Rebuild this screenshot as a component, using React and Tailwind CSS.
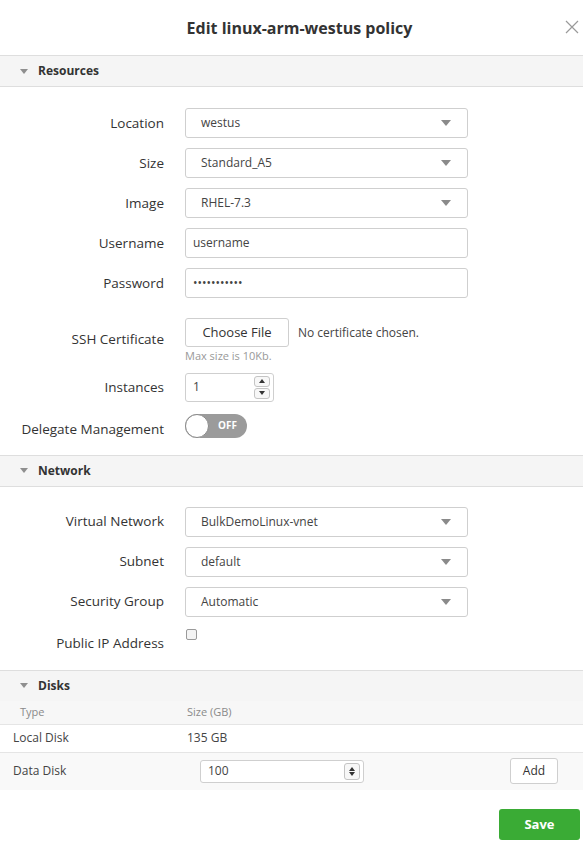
import React from "react";

const Caret = () => (
  <svg width="10" height="6" viewBox="0 0 10 6" className="shrink-0">
    <path d="M0 0 L10 0 L5 6 Z" fill="#8a8a8a" />
  </svg>
);

function SectionHeader({ title }) {
  return (
    <div className="flex h-[32px] items-center gap-[10px] border-y border-[#dedede] bg-[#f5f5f5] pl-[20px]">
      <svg width="8" height="5" viewBox="0 0 8 5">
        <path d="M0 0 L8 0 L4 5 Z" fill="#8f8f8f" />
      </svg>
      <span className="text-[12px] font-bold text-[#333]">{title}</span>
    </div>
  );
}

function Row({ label, children, className = "" }) {
  return (
    <div className={`flex items-center ${className}`}>
      <div className="w-[164px] shrink-0 text-right text-[13.5px] text-[#333]">{label}</div>
      <div className="ml-[21px] flex items-center">{children}</div>
    </div>
  );
}

function Select({ value }) {
  return (
    <div className="flex h-[30px] w-[283px] items-center justify-between rounded-[3px] border border-[#cfcfcf] bg-white pl-[15px] pr-[16px] text-[12px] text-[#444]">
      <span>{value}</span>
      <Caret />
    </div>
  );
}

function TextInput({ value }) {
  return (
    <div className="flex h-[30px] w-[283px] items-center rounded-[3px] border border-[#cfcfcf] bg-white pl-[7px] text-[12px] text-[#444]">
      {value}
    </div>
  );
}

function Spinner() {
  return (
    <div className="flex flex-col gap-[1px]">
      <div className="flex h-[11px] w-[16px] items-center justify-center rounded-[3px] border border-[#c4c4c4] bg-[#f7f7f7]">
        <svg width="6" height="4" viewBox="0 0 6 4">
          <path d="M0 4 L6 4 L3 0 Z" fill="#333" />
        </svg>
      </div>
      <div className="flex h-[11px] w-[16px] items-center justify-center rounded-[3px] border border-[#c4c4c4] bg-[#f7f7f7]">
        <svg width="6" height="4" viewBox="0 0 6 4">
          <path d="M0 0 L6 0 L3 4 Z" fill="#333" />
        </svg>
      </div>
    </div>
  );
}

export default function App() {
  return (
    <div className="h-[860px] w-[583px] bg-white" style={{ fontFamily: '"Open Sans", "Noto Sans", sans-serif' }}>
      {/* header */}
      <div className="flex h-[56px] items-center border-b border-[#dedede] pl-[34px] pr-[4px]">
        <div className="flex-1 text-center text-[16px] font-bold text-[#333]">Edit linux-arm-westus policy</div>
        <svg width="14" height="14" viewBox="0 0 14 14" className="mb-[2px]">
          <path d="M1 1 L13 13 M13 1 L1 13" stroke="#9a9a9a" strokeWidth="1.2" />
        </svg>
      </div>

      <div className="-mt-px">
        <SectionHeader title="Resources" />
      </div>

      <div className="flex flex-col gap-[10px] pt-[21px]">
        <Row label="Location"><Select value="westus" /></Row>
        <Row label="Size"><Select value="Standard_A5" /></Row>
        <Row label="Image"><Select value="RHEL-7.3" /></Row>
        <Row label="Username"><TextInput value="username" /></Row>
        <Row label="Password"><TextInput value="•••••••••••" /></Row>
      </div>

      <div className="mt-[20px] flex">
        <div className="w-[164px] shrink-0 pt-[11px] text-right text-[13.5px] text-[#333]">SSH Certificate</div>
        <div className="ml-[21px] flex flex-col">
          <div className="flex items-center">
            <div className="flex h-[29px] w-[104px] items-center justify-center rounded-[3px] border border-[#cfcfcf] text-[13px] text-[#333]">Choose File</div>
            <span className="ml-[9px] text-[12px] text-[#444]">No certificate chosen.</span>
          </div>
          <div className="mt-[1px] text-[11px] text-[#999]">Max size is 10Kb.</div>
        </div>
      </div>

      <Row label="Instances" className="mt-[8px]">
        <div className="flex h-[29px] w-[89px] items-center justify-between rounded-[3px] border border-[#cfcfcf] pl-[7px] pr-[3px] text-[12px] text-[#444]">
          <span>1</span>
          <Spinner />
        </div>
      </Row>

      <div className="mt-[12px] flex h-[24px] items-start">
        <div className="mt-[5px] w-[164px] shrink-0 text-right text-[13.5px] text-[#333]">Delegate Management</div>
        <div className="ml-[21px] flex h-[24px] w-[62px] items-center rounded-full bg-[#9b9b9b]">
          <div className="h-[24px] w-[24px] rounded-full border border-[#8a8a8a] bg-white" />
          <span className="ml-[9px] text-[10px] font-bold text-white">OFF</span>
        </div>
      </div>

      <div className="mt-[17px]">
        <SectionHeader title="Network" />
      </div>

      <div className="flex flex-col gap-[10px] pt-[20px]">
        <Row label="Virtual Network"><Select value="BulkDemoLinux-vnet" /></Row>
        <Row label="Subnet"><Select value="default" /></Row>
        <Row label="Security Group"><Select value="Automatic" /></Row>
      </div>

      <div className="mt-[12px] flex">
        <div className="w-[164px] shrink-0 pt-[4px] text-right text-[13.5px] text-[#333]">Public IP Address</div>
        <div className="ml-[22px] h-[11px] w-[11px] rounded-[2px] border border-[#9a9a9a] bg-[#f4f4f4]" />
      </div>

      <div className="mt-[17px]">
        <SectionHeader title="Disks" />
      </div>

      <div className="-mt-px text-[12px]">
        <div className="flex h-[24px] items-center border-b border-[#e5e5e5] bg-[#f7f7f7] text-[11px] text-[#8a8a8a]">
          <span className="w-[187px] pl-[20px]">Type</span>
          <span>Size (GB)</span>
        </div>
        <div className="flex h-[28px] items-center border-b border-[#e5e5e5] text-[#444]">
          <span className="w-[187px] pl-[13px]">Local Disk</span>
          <span>135 GB</span>
        </div>
        <div className="flex h-[37px] items-center bg-[#f9f9f9] text-[#444]">
          <span className="w-[200px] pl-[13px]">Data Disk</span>
          <div className="flex h-[23px] w-[164px] items-center justify-between rounded-[3px] border border-[#cfcfcf] bg-white pl-[7px] pr-[3px]">
            <span>100</span>
            <div className="flex h-[17px] w-[16px] flex-col items-center justify-center gap-[1px] rounded-[3px] border border-[#c4c4c4] bg-[#f7f7f7]">
              <svg width="6" height="4" viewBox="0 0 6 4"><path d="M0 4 L6 4 L3 0 Z" fill="#333" /></svg>
              <svg width="6" height="4" viewBox="0 0 6 4"><path d="M0 0 L6 0 L3 4 Z" fill="#333" /></svg>
            </div>
          </div>
          <div className="ml-auto mr-[25px] flex h-[26px] w-[48px] items-center justify-center rounded-[3px] border border-[#cfcfcf] bg-white text-[12px] text-[#333]">Add</div>
        </div>
      </div>

      <div className="flex justify-end pr-[3px] pt-[19px]">
        <div className="flex h-[31px] w-[81px] items-center justify-center rounded-[3px] bg-[#3aab35] text-[13px] font-bold text-white">Save</div>
      </div>
    </div>
  );
}
